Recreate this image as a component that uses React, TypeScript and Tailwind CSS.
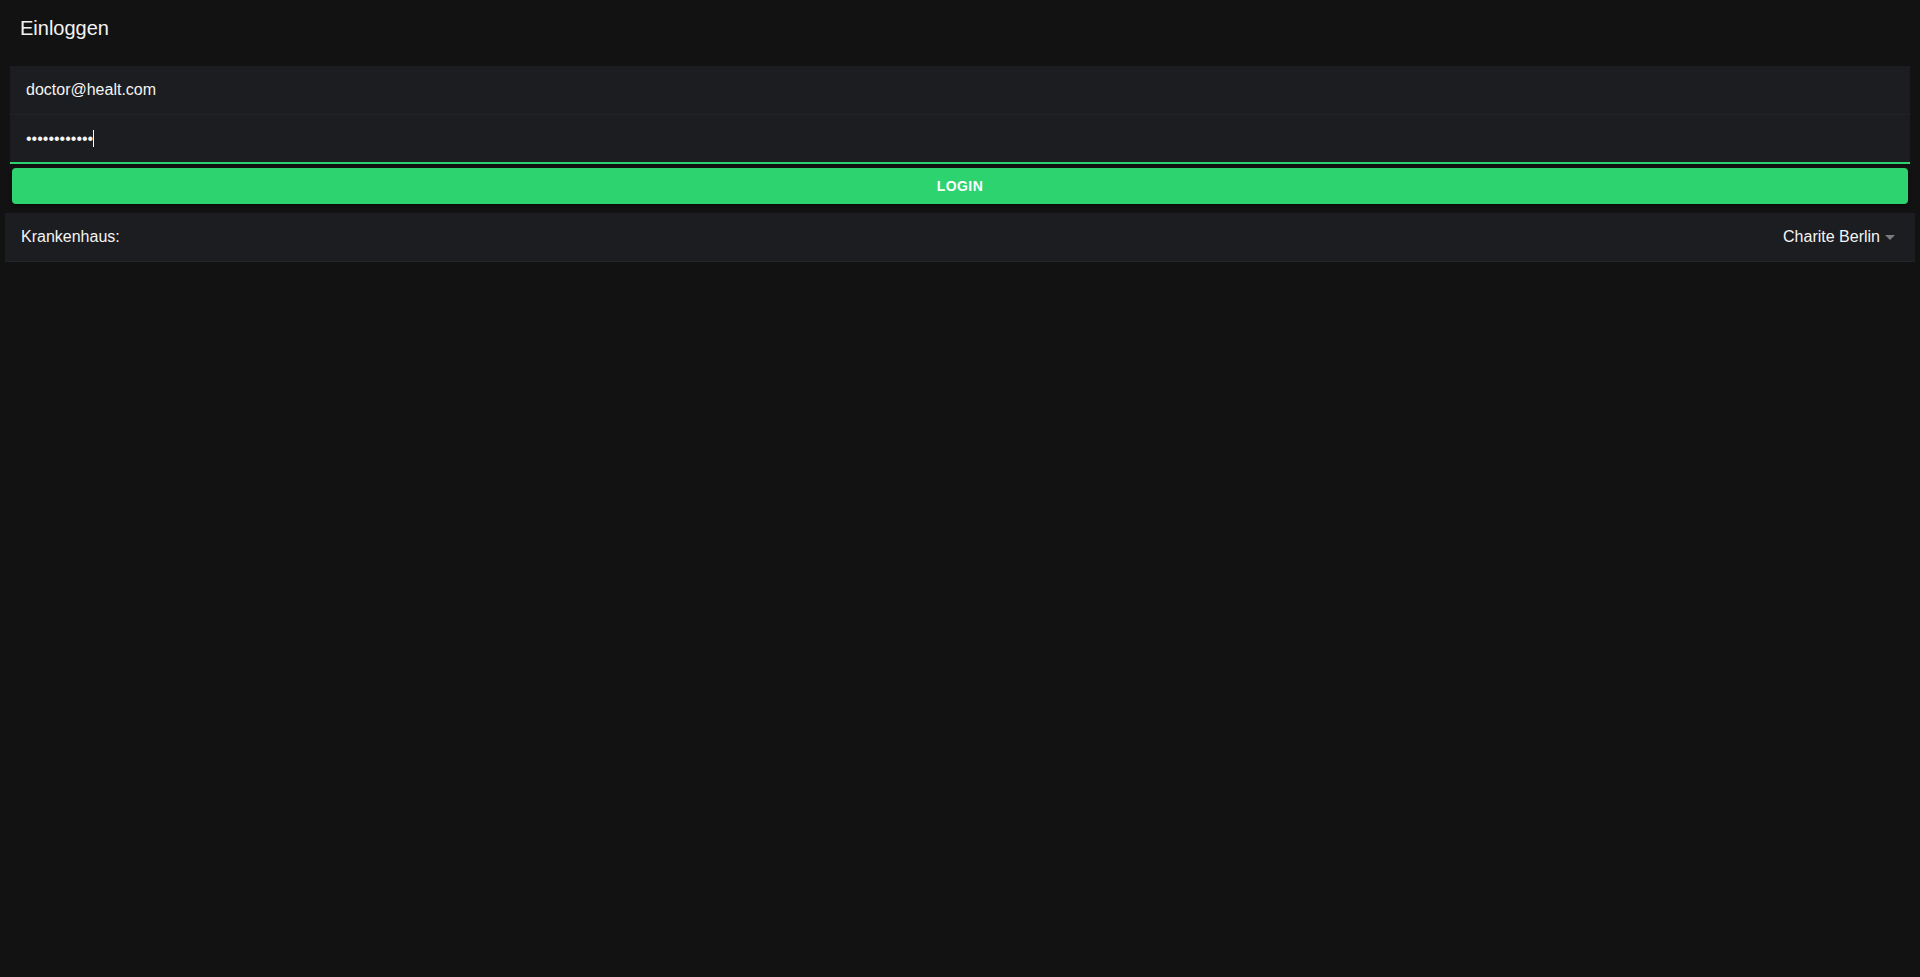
import { useState } from "react";

export default function App() {
  const [email] = useState("doctor@healt.com");
  const [password] = useState("••••••••••••");
  const [hospital] = useState("Charite Berlin");

  return (
    <div className="min-h-screen w-full bg-[#121212] text-white font-['Liberation_Sans',Arial,sans-serif]">
      {/* toolbar */}
      <header className="h-14 flex items-center px-5">
        <h1 className="text-[20px] leading-none text-[#f2f2f2]">Einloggen</h1>
      </header>

      <main className="flex flex-col">
        {/* login fields */}
        <div className="mx-[10px] mt-[10px] bg-[#1c1d21]">
          <div className="h-[49px] flex items-center px-4 border-b border-[#222327]">
            <span className="text-base text-[#f4f4f4]">{email}</span>
          </div>
          <div className="h-[49px] flex items-center px-4 border-b-2 border-[#2dd36f]">
            <span className="text-base text-[#f4f4f4]">{password}</span>
            <span className="w-px h-[17px] bg-white" />
          </div>
        </div>

        <div className="mx-[12px] mt-1">
          <button className="w-full h-9 rounded bg-[#2dd36f] text-white text-sm font-bold uppercase tracking-[0.03em] shadow-[0_3px_1px_-2px_rgba(0,0,0,0.2),0_2px_2px_0_rgba(0,0,0,0.14),0_1px_5px_0_rgba(0,0,0,0.12)]">
            Login
          </button>
        </div>

        {/* hospital select */}
        <div className="mx-[5px] mt-[9px] h-[49px] flex items-center justify-between pl-4 pr-[20px] bg-[#1c1d21] border-b border-[#26272b]">
          <span className="text-base text-[#f4f4f4]">Krankenhaus:</span>
          <div className="flex items-center gap-[5px]">
            <span className="text-base text-[#f4f4f4]">{hospital}</span>
            <svg width="10" height="5" viewBox="0 0 10 5" className="mt-px">
              <path d="M0 0h10L5 5z" fill="#7a7b7e" />
            </svg>
          </div>
        </div>
      </main>
    </div>
  );
}
